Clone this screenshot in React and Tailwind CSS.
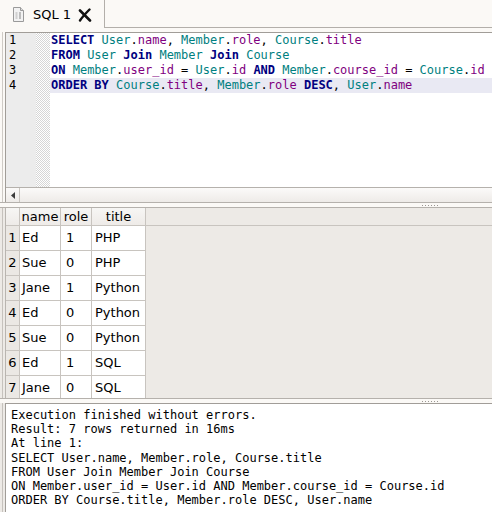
import React from "react";

const K = ({ children }) => <span className="font-bold text-[#000080]">{children}</span>;
const T = ({ children }) => <span className="text-[#008080]">{children}</span>;
const C = ({ children }) => <span className="text-[#800080]">{children}</span>;

const rows = [
  ["Ed", "1", "PHP"],
  ["Sue", "0", "PHP"],
  ["Jane", "1", "Python"],
  ["Ed", "0", "Python"],
  ["Sue", "0", "Python"],
  ["Ed", "1", "SQL"],
  ["Jane", "0", "SQL"],
];

const msg = [
  "Execution finished without errors.",
  "Result: 7 rows returned in 16ms",
  "At line 1:",
  "SELECT User.name, Member.role, Course.title",
  "FROM User Join Member Join Course",
  "ON Member.user_id = User.id AND Member.course_id = Course.id",
  "ORDER BY Course.title, Member.role DESC, User.name",
];

function Dots() {
  return (
    <div className="flex gap-[2px]">
      {[0, 1, 2, 3, 4, 5].map((i) => (
        <div key={i} className="w-[1px] h-[1px] bg-[#9a9692]" />
      ))}
    </div>
  );
}

export default function App() {
  return (
    <div className="w-[492px] h-[512px] overflow-hidden bg-[#edeae6] font-['DejaVu_Sans',sans-serif] text-black flex flex-col">
      {/* tab bar */}
      <div className="flex h-[28px] shrink-0 bg-[#fbf9f6]">
        <div className="w-[105px] h-full border-r border-[#b3afaa] flex items-center pt-[1px]">
          <svg width="13" height="15" viewBox="0 0 13 15" className="ml-[12px]">
            <path d="M1.5 0.5 H8.5 L11.5 3.5 V14.5 H1.5 Z" fill="#f2f2f2" stroke="#9a9a9a" />
            <path d="M8.5 0.5 V3.5 H11.5" fill="#dcdcdc" stroke="#9a9a9a" />
            <rect x="3.5" y="5" width="2" height="7" fill="#d0d0d0" />
            <rect x="7" y="5" width="2" height="7" fill="#bdbdbd" />
          </svg>
          <span className="ml-[8px] text-[13px] leading-none">SQL 1</span>
          <svg width="14" height="14" viewBox="0 0 14 14" className="ml-[7px]">
            <path d="M2 2.5 L12 12.5" stroke="#111" strokeWidth="2.6" strokeLinecap="round" />
            <path d="M11.5 1.5 C8 5, 5 8, 2 12.5" stroke="#111" strokeWidth="2.4" strokeLinecap="round" fill="none" />
          </svg>
        </div>
        <div className="flex-1 h-full border-b border-[#b3afaa]" />
      </div>
      <div className="h-[4px] shrink-0 bg-[#fbf9f6]" />

      {/* editor */}
      <div className="flex shrink-0 bg-[#fbf9f6]">
        <div className="w-[3px] border-r border-[#cfcbc6]" />
        <div className="w-[2px]" />
        <div className="flex-1 flex flex-col border-t border-l border-[#a19d98] bg-white">
          <div className="h-[154px] flex">
            <div className="w-[30px] bg-[#ececec] font-['DejaVu_Sans_Mono',monospace] text-[12px] leading-[15px] pl-[3px]">
              <div>1</div>
              <div>2</div>
              <div>3</div>
              <div>4</div>
            </div>
            <div className="w-[14px] bg-[image:repeating-conic-gradient(#d6d6d6_0_25%,#ffffff_0_50%)] bg-[length:2px_2px]" />
            <div className="flex-1 font-['DejaVu_Sans_Mono',monospace] text-[12px] leading-[15px] whitespace-pre">
              <div className="pl-[1px]">
                <K>SELECT</K> <T>User</T>.<C>name</C>, <T>Member</T>.<C>role</C>, <T>Course</T>.<C>title</C>
              </div>
              <div className="pl-[1px]">
                <K>FROM</K> <T>User</T> <K>Join</K> <T>Member</T> <K>Join</K> <T>Course</T>
              </div>
              <div className="pl-[1px]">
                <K>ON</K> <T>Member</T>.<C>user_id</C> = <T>User</T>.<C>id</C> <K>AND</K> <T>Member</T>.<C>course_id</C> = <T>Course</T>.<C>id</C>
              </div>
              <div className="pl-[1px] bg-[#e9e9f3]">
                <K>ORDER BY</K> <T>Course</T>.<C>title</C>, <T>Member</T>.<C>role</C> <K>DESC</K>, <T>User</T>.<C>name</C>
              </div>
            </div>
          </div>
          {/* horizontal scrollbar */}
          <div className="h-[15px] border-t border-[#b5b1ac] bg-gradient-to-b from-[#fbfaf9] to-[#eeebe8] flex">
            <div className="w-[14px] h-full border-r border-[#c9c5c0] flex items-center justify-center">
              <svg width="4" height="7" viewBox="0 0 4 7">
                <path d="M4 0 L0 3.5 L4 7 Z" fill="#3c3c3c" />
              </svg>
            </div>
          </div>
        </div>
      </div>

      {/* splitter */}
      <div className="h-[6px] shrink-0 border-t border-b border-[#b5b1ac] bg-[#fbf9f6] flex items-center pl-[422px]">
        <Dots />
      </div>

      {/* table pane */}
      <div className="h-[190px] shrink-0 flex overflow-hidden">
        <div className="w-[3px] border-r border-[#c6c2bd]" />
        <div className="w-[2px]" />
        <div className="flex-1 border-l border-[#b9b5b0] overflow-hidden">
          <div className="flex h-[18px] border-b border-[#c8c4bf]">
            <div className="w-[14px] border-r border-[#c8c4bf] bg-gradient-to-b from-[#f7f6f4] to-[#eeebe8]" />
            <div className="w-[41px] border-r border-[#c8c4bf] bg-gradient-to-b from-[#f7f6f4] to-[#eeebe8] text-[13px] leading-[17px] text-center">name</div>
            <div className="w-[31px] border-r border-[#c8c4bf] bg-gradient-to-b from-[#f7f6f4] to-[#eeebe8] text-[13px] leading-[17px] text-center">role</div>
            <div className="w-[54px] border-r border-[#c8c4bf] bg-gradient-to-b from-[#f7f6f4] to-[#eeebe8] text-[13px] leading-[17px] text-center">title</div>
          </div>
          {rows.map((r, i) => (
            <div key={i} className="flex h-[25px] text-[13px]">
              <div className="w-[14px] border-r border-b border-[#c8c4bf] bg-[#ebe8e4] flex items-center justify-center">{i + 1}</div>
              <div className="w-[41px] border-r border-b border-[#c8c4bf] bg-white flex items-center pl-[2px]">{r[0]}</div>
              <div className="w-[31px] border-r border-b border-[#c8c4bf] bg-white flex items-center pl-[5px]">{r[1]}</div>
              <div className="w-[54px] border-r border-b border-[#c8c4bf] bg-white flex items-center pl-[3px]">{r[2]}</div>
            </div>
          ))}
        </div>
      </div>

      {/* splitter 2 */}
      <div className="h-[5px] shrink-0 border-t border-[#b5b1ac] bg-[#fbf9f6] flex items-center pl-[422px]">
        <Dots />
      </div>

      {/* message pane */}
      <div className="flex-1 flex">
        <div className="w-[3px] border-r border-[#c6c2bd]" />
        <div className="w-[2px]" />
        <div className="flex-1 border-t border-l border-[#a19d98] bg-white pl-[5px] pt-[4px] font-['DejaVu_Sans_Mono',monospace] text-[12px] leading-[14.2px] whitespace-pre">
          {msg.map((m, i) => (
            <div key={i}>{m}</div>
          ))}
        </div>
      </div>
    </div>
  );
}
